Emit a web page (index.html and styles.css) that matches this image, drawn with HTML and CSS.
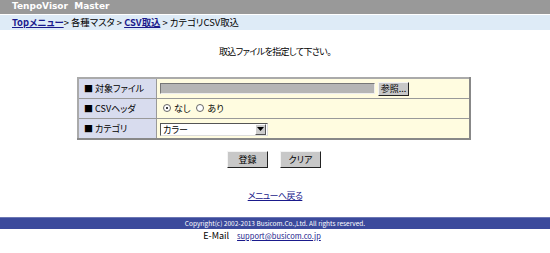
FILE: index.html
```html
<!DOCTYPE html>
<html lang="ja">
<head>
<meta charset="utf-8">
<title>TenpoVisor Master</title>
<link rel="stylesheet" href="styles.css">
</head>
<body>
<div class="titlebar">TenpoVisor&nbsp; Master</div>
<div class="crumbs"><a href="#">Topメニュー</a>&gt; 各種マスタ &gt; <a href="#">CSV取込</a> &gt; カテゴリCSV取込</div>
<p class="lead">取込ファイルを指定して下さい。</p>
<table class="form">
  <tr>
    <th>■&nbsp;対象ファイル</th>
    <td><span class="file"></span><button class="btn browse" type="button">参照...</button></td>
  </tr>
  <tr>
    <th>■&nbsp;CSVヘッダ</th>
    <td><label class="radio"><span class="dot on"></span>なし</label><label class="radio"><span class="dot"></span>あり</label></td>
  </tr>
  <tr>
    <th>■&nbsp;カテゴリ</th>
    <td><span class="select"><span class="sel-text">カラー</span><span class="arrow"><svg width="7" height="4" viewBox="0 0 7 4"><path d="M0 0h7L3.5 4z" fill="#000"/></svg></span></span></td>
  </tr>
</table>
<div class="actions">
  <button class="btn big" type="button">登録</button>
  <button class="btn big" type="button">クリア</button>
</div>
<div class="back"><a href="#">メニューへ戻る</a></div>
<div class="footer">Copyright(c) 2002-2013 Busicom.Co.,Ltd. All rights reserved.</div>
<div class="mail"><span>E-Mail</span><a href="#">support@busicom.co.jp</a></div>
</body>
</html>
```
FILE: styles.css
```css
body {
  margin: 0;
  background: #fff;
  font-family: "Noto Sans CJK JP", "Liberation Sans", sans-serif;
  font-feature-settings: "palt";
  font-size: 9px;
  color: #000;
}
a { color: #1a1a8c; }
.titlebar {
  height: 14px;
  line-height: 13px;
  background: #999;
  color: #fff;
  font-weight: bold;
  font-family: "DejaVu Sans", sans-serif;
  font-size: 9px;
  padding-left: 12px;
}
.crumbs {
  height: 15px;
  line-height: 15px;
  background: #deebf7;
  padding-left: 12px;
  font-size: 9.4px;
  border-top: 1px solid #fff;
}
.crumbs a { font-weight: bold; color: #1a1a8c; }
.lead {
  margin: 15px 0 0;
  text-align: center;
  line-height: 14px;
  letter-spacing: -0.6px;
}
.form {
  margin: 18px 0 0 77px;
  width: 394px;
  border-collapse: collapse;
  border: 2px solid #888;
  border-top-color: #aaa;
  border-left-color: #aaa;
}
.form th, .form td {
  height: 19px;
  padding: 0 0 0 3px;
  border: 1px solid #999;
  text-align: left;
  font-weight: normal;
  white-space: nowrap;
}
.form th {
  width: 72px;
  background: #d8dcee;
  padding-left: 5px;
}
.form td { background: #fffce0; }
.file {
  display: inline-block;
  vertical-align: middle;
  width: 213px;
  height: 9px;
  background: #b5b5b5;
  border: 1px solid #777;
  border-right-color: #eee;
  border-bottom-color: #eee;
}
.btn {
  font-family: inherit;
  font-feature-settings: "palt";
  font-size: 9px;
  background: #c8c8c8;
  color: #000;
  border: 1px solid;
  border-color: #f4f4f4 #222 #222 #f4f4f4;
  padding: 0;
  cursor: default;
}
.browse {
  width: 31px;
  height: 14px;
  line-height: 12px;
  margin-left: 3px;
  vertical-align: middle;
}
.radio {
  display: inline-flex;
  align-items: center;
  margin-left: 3px;
  margin-right: 3px;
}
.dot {
  width: 8px;
  height: 8px;
  border-radius: 50%;
  border: 1px solid #666;
  background: #fff;
  margin-right: 3px;
  box-sizing: border-box;
  position: relative;
}
.dot.on::after {
  content: "";
  position: absolute;
  left: 2px;
  top: 2px;
  width: 2px;
  height: 2px;
  background: #000;
  border-radius: 50%;
}
.select {
  display: inline-flex;
  align-items: center;
  justify-content: space-between;
  width: 104px;
  height: 11px;
  background: #fff;
  border: 1px solid #555;
  border-right-color: #ddd;
  border-bottom-color: #ddd;
  vertical-align: middle;
  padding-left: 2px;
}
.arrow {
  width: 9px;
  height: 9px;
  background: #ccc;
  border: 1px solid;
  border-color: #fff #555 #555 #fff;
  display: flex;
  align-items: center;
  justify-content: center;
  margin-right: 1px;
}
.actions {
  display: flex;
  justify-content: center;
  gap: 12px;
  margin-top: 11px;
  padding-right: 2px;
}
.big {
  width: 41px;
  height: 17px;
}
.back {
  text-align: center;
  margin-top: 22px;
  line-height: 12px;
  letter-spacing: -0.6px;
}
.footer {
  margin-top: 15px;
  height: 11px;
  line-height: 11px;
  background: #3b4a9c;
  color: #fff;
  text-align: center;
  font-size: 6.5px;
  border-top: 1px solid #6c77b3;
}
.mail {
  text-align: center;
  margin-top: 1px;
  line-height: 12px;
  padding-right: 26px;
}
.mail a { margin-left: 8px; color: #1a1a8c; font-size: 7.5px; }
```
